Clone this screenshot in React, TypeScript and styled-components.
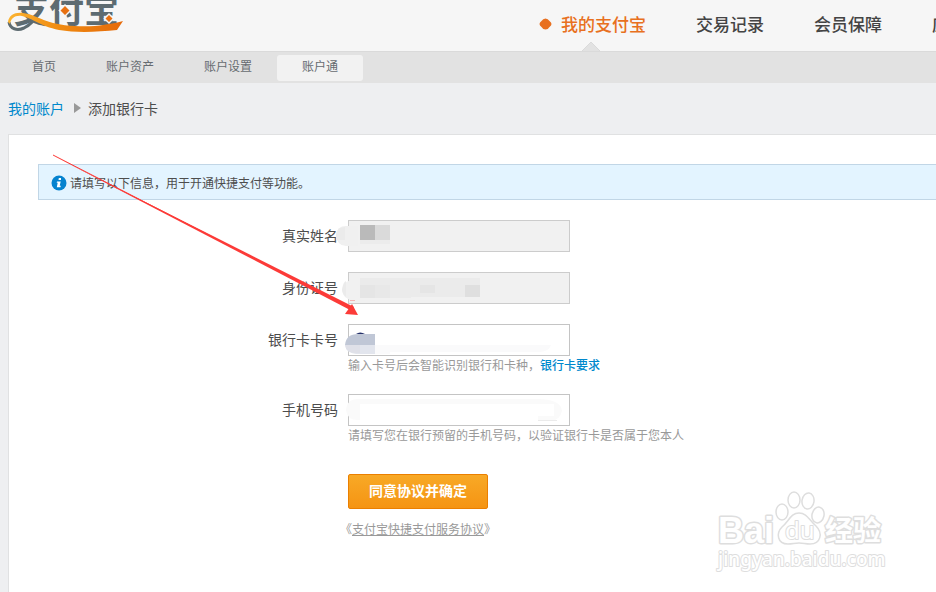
import React from "react";
import styled, { createGlobalStyle, css } from "styled-components";

const GlobalStyle = createGlobalStyle`
  * { box-sizing: border-box; }
  html { overflow: hidden; }
  body {
    margin: 0;
    background: #eeeff1;
    color: #4d4d4d;
    font: 12px/20px "Noto Sans CJK SC", sans-serif;
  }
  input, button { font: inherit; }
`;

const Page = styled.div`
  position: relative;
  display: flex;
  flex-direction: column;
  min-height: 100vh;
  overflow: hidden;
`;

const Header = styled.header`
  display: flex;
  height: 51px;
  overflow: hidden;
  background: #f6f6f6;
`;

const LogoLink = styled.a`
  flex: none;
  width: 140px;
  height: 40px;
`;

const MainNav = styled.nav`
  display: flex;
  flex: none;
  gap: 50px;
  margin-left: 399px;
`;

const MainLink = styled.a<{ $active?: boolean }>`
  position: relative;
  display: flex;
  align-items: center;
  gap: 9px;
  height: 51px;
  padding-bottom: 3px;
  color: ${(p) => (p.$active ? "#e87020" : "#444")};
  font-size: 17px;
  font-weight: 500;
  white-space: nowrap;
  text-decoration: none;
`;

const ActiveDot = styled.svg`
  width: 13px;
  height: 12px;
`;

const Notch = styled.svg`
  position: absolute;
  left: 43px;
  bottom: 0;
  width: 18px;
  height: 9px;
`;

const SubNav = styled.nav`
  display: flex;
  align-items: center;
  height: 32px;
  padding-left: 7px;
  border-top: 1px solid #dadada;
  background: #e2e2e2;
`;

const SubLink = styled.a<{ $active?: boolean }>`
  padding: 1px 25px 5px;
  border-radius: 3px;
  color: #666b70;
  text-decoration: none;
  ${(p) =>
    p.$active &&
    css`
      background: #f2f2f2;
    `}
`;

const Breadcrumb = styled.nav`
  display: flex;
  align-items: center;
  gap: 7px;
  height: 51px;
  padding: 0 0 2px 8px;
  font-size: 14px;
`;

const CrumbLink = styled.a`
  margin-right: 3px;
  color: #0088cc;
  text-decoration: none;
`;

const CrumbArrow = styled.svg`
  width: 7px;
  height: 10px;
  fill: #999;
`;

const Panel = styled.main`
  flex: 1;
  margin-left: 8px;
  padding: 29px 0 40px 29px;
  border: 1px solid #e0e1e2;
  border-width: 1px 0 0 1px;
  background: #fff;
`;

const Notice = styled.p`
  display: flex;
  align-items: center;
  gap: 3px;
  height: 36px;
  margin: 0 0 20px;
  padding: 2px 0 0 12px;
  border: 1px solid #c1d6e6;
  border-right: 0;
  background: #e3f4ff;
`;

const Form = styled.form`
  display: flex;
  flex-direction: column;
  gap: 20px;
`;

const Row = styled.div`
  display: grid;
  grid-template-columns: 300px minmax(0, 1fr);
  column-gap: 10px;
`;

const Label = styled.label`
  font-size: 14px;
  line-height: 30px;
  text-align: right;
`;

const Field = styled.div`
  position: relative;
`;

const TextInput = styled.input`
  display: block;
  width: 222px;
  height: 32px;
  padding: 0 8px;
  border: 1px solid #c4c4c4;
  border-radius: 0;
  background: #fff;
  outline: 0;
  &:disabled {
    border-color: #ccc;
    background: #f1f1f1;
  }
`;

const Redaction = styled.svg`
  position: absolute;
  left: -16px;
  top: 0;
  width: 240px;
  height: 32px;
  pointer-events: none;
`;

const Hint = styled.p`
  margin: 0;
  color: #999;
  line-height: 18px;
`;

const HintLink = styled.a`
  color: #0088cc;
  font-weight: 500;
  text-decoration: none;
`;

const Actions = styled.div`
  display: flex;
  flex-direction: column;
  align-items: flex-start;
  gap: 10px;
  margin: 10px 0 0 310px;
`;

const SubmitButton = styled.button`
  width: 140px;
  height: 35px;
  padding: 0 0 3px;
  border: 1px solid #eb7f00;
  border-radius: 2px;
  background: linear-gradient(#f8a926, #f59413);
  color: #fff;
  font-size: 14px;
  font-weight: 700;
`;

const Agreement = styled.a`
  margin-left: -8px;
  color: #999;
  text-decoration: none;
`;

const AgreementName = styled.span`
  text-decoration: underline;
`;

const ArrowNote = styled.svg`
  position: absolute;
  left: 50px;
  top: 152px;
  width: 312px;
  height: 168px;
  pointer-events: none;
`;

const Watermark = styled.svg`
  position: absolute;
  right: 46px;
  bottom: 16px;
  width: 176px;
  height: 90px;
  pointer-events: none;
`;

const SUB_LINKS = ["首页", "账户资产", "账户设置", "账户通"];
const MAIN_LINKS = ["交易记录", "会员保障", "应用中心"];

function Logo() {
  return (
    <LogoLink href="#" aria-label="支付宝">
      <svg width="140" height="40" viewBox="0 0 140 40">
        <defs>
          <linearGradient id="swoosh" x1="8" x2="123" y1="0" y2="0" gradientUnits="userSpaceOnUse">
            <stop offset="0" stopColor="#fbb431" />
            <stop offset="0.45" stopColor="#f08a10" />
            <stop offset="1" stopColor="#e56a0a" />
          </linearGradient>
        </defs>
        <text
          x="14"
          y="23"
          fill="#5d6b71"
          fontFamily="Noto Sans CJK SC, sans-serif"
          fontSize="35"
          fontWeight="700"
        >
          支付宝
        </text>
        <path d="M9 22C10 29 17 31 24 28C32 24 36 18 39 12" fill="none" stroke="#5d6b71" strokeWidth="3" />
        <path
          d="M8 22C9 15 15 12 23 13C38 15 46 25 75 26C94 27 108 25 123 21L117 30C98 32 76 33 59 30C40 26 32 18 22 16C15 15 11 18 10 24Z"
          fill="url(#swoosh)"
        />
        <path
          d="M65 6l4.500 4.500-4.500 4.500-4.500-4.500z M109 15l3.500 3.500-3.500 3.500-3.500-3.500z"
          fill="#e87010"
          stroke="#f6f6f6"
          strokeWidth="3"
          paintOrder="stroke"
        />
      </svg>
    </LogoLink>
  );
}

function InfoIcon() {
  return (
    <svg width="16" height="16" viewBox="0 0 16 16" aria-hidden="true">
      <circle cx="8" cy="8" r="7.500" fill="#0583cf" />
      <path d="M7.800 3h2.200v2H7.500z M6 6.400h3.700l-1 4.400h1.100l-.3 1.400H5.800l.9-4.400H5.700z" fill="#fff" />
    </svg>
  );
}

export default function App() {
  return (
    <>
      <GlobalStyle />
      <Page>
        <Header>
          <Logo />
          <MainNav aria-label="主导航">
            <MainLink href="#" $active>
              <ActiveDot viewBox="0 0 13 12" aria-hidden="true">
                <path d="M6.500 .500Q9 .500 10.500 3Q14.500 6 10.500 9Q9 11.500 6.500 11.500Q4 11.500 2.500 9Q-1.500 6 2.500 3Q4 .500 6.500 .500Z" fill="#e87020" />
              </ActiveDot>
              我的支付宝
              <Notch viewBox="0 0 18 9" aria-hidden="true">
                <path d="M0 9L9 0L18 9Z" fill="#e2e2e2" />
                <path d="M0 9L9 0L18 9" fill="none" stroke="#dadada" />
              </Notch>
            </MainLink>
            {MAIN_LINKS.map((name) => (
              <MainLink key={name} href="#">
                {name}
              </MainLink>
            ))}
          </MainNav>
        </Header>
        <SubNav aria-label="账户导航">
          {SUB_LINKS.map((name) => (
            <SubLink key={name} href="#" $active={name === "账户通"}>
              {name}
            </SubLink>
          ))}
        </SubNav>
        <Breadcrumb aria-label="当前位置">
          <CrumbLink href="#">我的账户</CrumbLink>
          <CrumbArrow viewBox="0 0 7 10" aria-hidden="true">
            <path d="M0 0L7 5L0 10Z" />
          </CrumbArrow>
          <span>添加银行卡</span>
        </Breadcrumb>
        <Panel>
          <Notice>
            <InfoIcon />
            请填写以下信息，用于开通快捷支付等功能。
          </Notice>
          <Form onSubmit={(e) => e.preventDefault()}>
            <Row>
              <Label htmlFor="name">真实姓名</Label>
              <Field>
                <TextInput id="name" disabled />
                <Redaction viewBox="0 0 240 32" aria-hidden="true">
                  <path d="M4 15Q5 6 14 6H26V26H14Q5 26 4 15Z" fill="#f0f0f0" />
                  <path d="M4 15Q5 7 13 7V20H4Z" fill="#ebebeb" />
                  <path d="M28 5h15v15H28z" fill="#bababa" />
                  <path d="M43 5h15v15H43z" fill="#dadada" />
                  <path d="M28 20h30v4H28z" fill="#ececec" />
                </Redaction>
              </Field>
            </Row>
            <Row>
              <Label htmlFor="identity">身份证号</Label>
              <Field>
                <TextInput id="identity" disabled />
                <Redaction viewBox="0 0 240 32" aria-hidden="true">
                  <path d="M10 18Q11 10 19 8H28V28H19Q11 26 10 18Z" fill="#f1f1f1" />
                  <path d="M10 18Q11 10 14 9V25Q11 23 10 18Z" fill="#ebebeb" />
                  <path d="M28 6h120v19H79v1H28z" fill="#ebebeb" />
                  <path d="M28 13h15v13H28z M88 13h15v8H88z" fill="#e5e5e5" />
                  <path d="M43 13h15v13H43z" fill="#e8e8e8" />
                  <path d="M133 13h15v12h-15z" fill="#dfdfdf" />
                  <path d="M18 28h5v1h-5z" fill="#f3b5b5" />
                </Redaction>
              </Field>
            </Row>
            <Row>
              <Label htmlFor="card">银行卡卡号</Label>
              <Field>
                <TextInput id="card" inputMode="numeric" aria-describedby="card-hint" />
                <Redaction viewBox="0 0 240 32" aria-hidden="true">
                  <path d="M14 21H219Q217 28 207 28H58V30H24Q14 29 14 21Z" fill="#fafafb" />
                  <path d="M24 10Q28 7 33 10Z" fill="#26326b" />
                  <path d="M13 21Q14 10 26 10H43V21Z" fill="#c0c7d6" />
                  <path d="M13 21H43V30H24Q14 29 13 21Z" fill="#e2e5ed" />
                  <path d="M13 21H28V29H24Q14 29 13 21Z" fill="#dfe0e8" />
                </Redaction>
                <Hint id="card-hint">
                  输入卡号后会智能识别银行和卡种，<HintLink href="#">银行卡要求</HintLink>
                </Hint>
              </Field>
            </Row>
            <Row>
              <Label htmlFor="phone">手机号码</Label>
              <Field>
                <TextInput id="phone" type="tel" aria-describedby="phone-hint" />
                <Redaction viewBox="0 0 240 32" aria-hidden="true">
                  <path d="M14 16Q15 5 26 5H205Q229 5 230 17Q228 26 219 27L206 26V22H222V10H28V26Q15 27 14 16Z" fill="#fafafa" />
                  <path d="M206 26h19v1h-19z" fill="#ebebeb" />
                </Redaction>
                <Hint id="phone-hint">请填写您在银行预留的手机号码，以验证银行卡是否属于您本人</Hint>
              </Field>
            </Row>
            <Actions>
              <SubmitButton type="submit">同意协议并确定</SubmitButton>
              <Agreement href="#">
                《<AgreementName>支付宝快捷支付服务协议</AgreementName>》
              </Agreement>
            </Actions>
          </Form>
        </Panel>
        <ArrowNote viewBox="0 0 312 168" aria-hidden="true">
          <path d="M2 3L304 155L302 159L2 3Z" fill="#fc3b38" />
          <path d="M3 3L303 157" stroke="#fc3b38" />
          <path d="M308 163L302 152L295 162Z" fill="#fc3b38" />
        </ArrowNote>
        <Watermark viewBox="0 0 176 90" aria-hidden="true">
          <g fill="#fff" stroke="#dedede" strokeWidth="1.500">
            <ellipse cx="68" cy="26" rx="6" ry="8" />
            <ellipse cx="80" cy="14" rx="6" ry="8" />
            <ellipse cx="94" cy="15" rx="6" ry="8" transform="rotate(8 94 15)" />
            <ellipse cx="104" cy="29" rx="6" ry="8" transform="rotate(12 104 29)" />
            <path d="M85 27C93 27 95 34 102 40C109 47 107 58 96 58C91 58 90 57 85 57C80 57 79 58 74 58C63 58 62 47 68 41C75 35 77 27 85 27Z" />
          </g>
          <g fill="#fff" stroke="#dedede" strokeWidth="3" strokeLinejoin="round" paintOrder="stroke">
            <text x="4" y="57" fontFamily="Liberation Sans, sans-serif" fontSize="36" fontWeight="700">
              Bai
            </text>
            <text x="71" y="53" fontFamily="Noto Sans, sans-serif" fontSize="24" strokeWidth="2">
              du
            </text>
            <text x="111" y="55" fontFamily="Noto Sans CJK SC, sans-serif" fontSize="28" fontWeight="700">
              经验
            </text>
            <text x="4" y="80" strokeWidth="2" fontFamily="Noto Sans, sans-serif" fontSize="19" fontWeight="500">
              jingyan.baidu.com
            </text>
          </g>
        </Watermark>
      </Page>
    </>
  );
}
